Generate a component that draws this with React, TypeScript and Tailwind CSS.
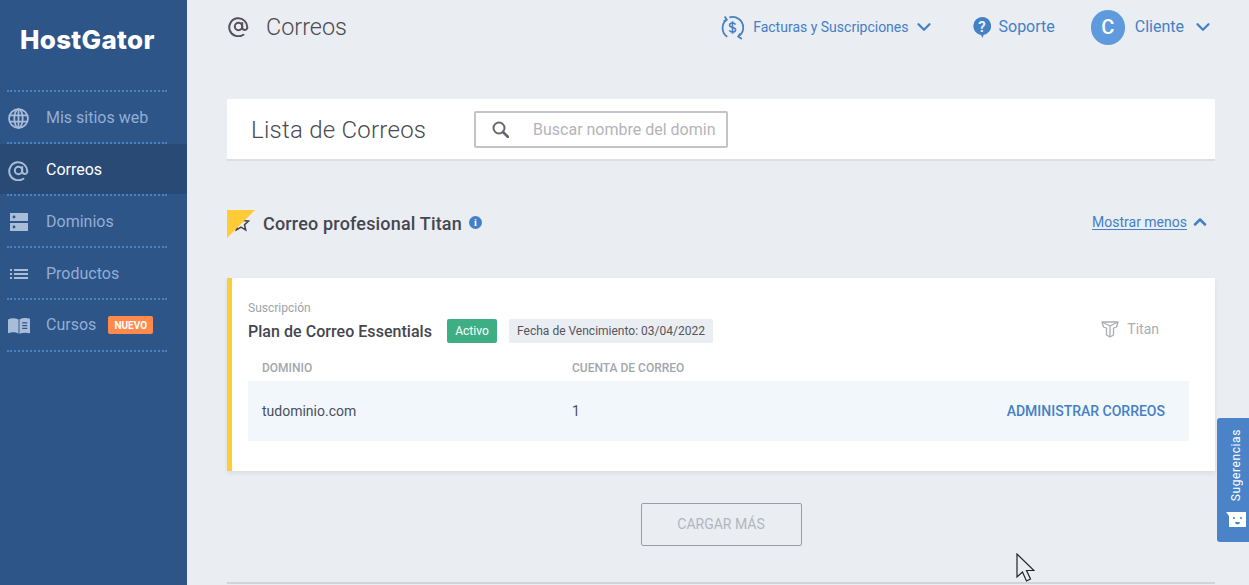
import { ChevronDown, ChevronUp } from 'lucide-react';

const AtIcon = ({ className }: { className: string }) => (
  <svg viewBox="0 0 24 24" fill="none" stroke="currentColor" strokeWidth="2.3" className={className}>
    <circle cx="12" cy="12" r="4.2" />
    <path d="M16.2 8v5.4a3 3 0 0 0 5.8 .6 10.3 10.3 0 1 0-4.4 7.4" strokeLinecap="round" />
  </svg>
);

const GlobeIcon = () => (
  <svg viewBox="0 0 20 20" fill="none" stroke="currentColor" strokeWidth="1.7" className="w-[21px] h-[21px]">
    <circle cx="10" cy="10" r="9" />
    <ellipse cx="10" cy="10" rx="4" ry="9" />
    <path d="M10 1v18M1.6 7h16.8M1.6 13h16.8" />
  </svg>
);

const ServerIcon = () => (
  <svg viewBox="0 0 18 18" className="ml-[2px] w-[18px] h-[18px]" fill="currentColor">
    <path fillRule="evenodd" d="M0 0h18v8H0zM4 2.6a1.4 1.4 0 1 0 0 2.8 1.4 1.4 0 0 0 0-2.8z" />
    <path fillRule="evenodd" d="M0 10h18v8H0zM4 12.6a1.4 1.4 0 1 0 0 2.8 1.4 1.4 0 0 0 0-2.8z" />
  </svg>
);

const ListIcon = () => (
  <svg viewBox="0 0 18 10" className="ml-[2px] w-[18px] h-[10px]" fill="currentColor">
    <path d="M0 0h2v2H0zM4 0h14v2H4zM0 4h2v2H0zM4 4h14v2H4zM0 8h2v2H0zM4 8h14v2H4z" />
  </svg>
);

const BookIcon = () => (
  <svg viewBox="0 0 24 18" className="w-[22px] h-[17px]" fill="currentColor">
    <path d="M0 2.5C3.5.5 7.5.5 11.5 2.5V18C8 16 4 16 0 17.5z" />
    <path fillRule="evenodd" d="M12.5 2.5C16 .5 20 .5 24 1.5v16c-4-1-8-1-11.5.5zM15.500 5.500v1.200h5.500V5.500zM15.500 8.500v1.200h5.500V8.500zM15.500 11.500v1.200h5.500v-1.200z" />
  </svg>
);

const BillingIcon = () => (
  <svg viewBox="0 0 24 24" fill="none" stroke="#4480c6" strokeWidth="1.7" className="w-[25px] h-[25px]">
    <path d="M6.500 4.300A10.300 10.300 0 0 0 7 21" />
    <path d="M9 2.300A10.300 10.300 0 0 1 22.300 12a10.300 10.300 0 0 1-4.800 8.700" />
    <path d="M4.500 1.500l2 3-3 1.500M21 23l-3.500-2.300 2-3" />
    <path d="M15 9.200c-.6-1-1.700-1.500-3-1.500-1.600 0-2.800.8-2.800 2.100 0 2.900 5.800 1.400 5.800 4.300 0 1.300-1.300 2.200-3 2.200-1.400 0-2.500-.6-3.100-1.600M12 6v12" strokeWidth="1.500" />
  </svg>
);

const HelpBubble = () => (
  <svg viewBox="0 0 18 21" className="w-[18px] h-[21px]">
    <path d="M9 0a9 9 0 0 1 1.500 17.900L9.500 21 8 17.900A9 9 0 0 1 9 0z" fill="#4480c6" />
    <text x="9" y="14.500" textAnchor="middle" fontSize="15" fontWeight="700" fill="#eaedf2" fontFamily="Roboto, sans-serif">?</text>
  </svg>
);

const SearchIcon = () => (
  <svg viewBox="0 0 17 17" fill="none" stroke="#6b6570" className="w-[17px] h-[17px] shrink-0">
    <circle cx="7" cy="7" r="5.500" strokeWidth="2" />
    <path d="M11 11l5 5" strokeWidth="2.600" strokeLinecap="round" />
  </svg>
);

const TitanIcon = () => (
  <svg viewBox="0 0 18 17" fill="none" stroke="#a9adb3" strokeWidth="1.300" strokeLinejoin="round" className="w-[18px] h-[17px]">
    <path d="M1 1h16l-1.500 5-3 1v7L9 16l-3.500-2V7l-3-1z" />
    <path d="M1 1l8 4 8-4M9 5v11" />
  </svg>
);

const navItems = [
  { label: 'Mis sitios web', icon: <GlobeIcon />, nudge: true },
  { label: 'Correos', icon: <AtIcon className="w-[21px] h-[21px]" />, active: true, nudge: true },
  { label: 'Dominios', icon: <ServerIcon />, nudge: true },
  { label: 'Productos', icon: <ListIcon />, nudge: true },
  { label: 'Cursos', icon: <BookIcon />, badge: 'NUEVO' },
];

const rowClass = (active?: boolean, nudge?: boolean) => {
  if (active) return 'h-[50px] flex items-center bg-[#284a75] text-white pt-[2px]';
  if (nudge) return 'h-[50px] flex items-center text-[#93aed6] pt-[2px]';
  return 'h-[50px] flex items-center text-[#93aed6]';
};

const Sidebar = () => (
  <aside className="w-[187px] shrink-0 bg-[#2d5588]">
    <div className="h-[90px] pl-[20px] pt-[25px] font-['Inter',sans-serif] text-[26px] leading-[30px] font-extrabold tracking-[0.3px] text-white">
      HostGator
    </div>
    <div className="h-0 mx-[7px] w-[160px] border-t-2 border-dotted border-[#4a82c8]" />
    {navItems.map((item) => (
      <div key={item.label}>
        <div className={rowClass(item.active, item.nudge)}>
          <span className="w-[46px] pl-[8px] flex items-center text-[#a9bdd9] shrink-0">{item.icon}</span>
          <span className="text-[16px]">{item.label}</span>
          {item.badge && (
            <span className="ml-[12px] w-[45px] h-[18px] flex items-center justify-center rounded-[2px] bg-[#ff8a4c] text-[10px] font-bold text-white">
              {item.badge}
            </span>
          )}
        </div>
        <div className="h-0 mx-[7px] w-[160px] border-t-2 border-dotted border-[#4a82c8]" />
      </div>
    ))}
  </aside>
);

const Header = () => (
  <header className="h-[54px] flex items-center justify-between">
    <div className="flex items-center text-[#55505a]">
      <AtIcon className="w-[21px] h-[21px] ml-[1px]" />
      <h1 className="ml-[17px] pt-[2px] text-[23.4px] font-light text-[#4a4a50]">Correos</h1>
    </div>
    <div className="flex items-center text-[#4480c6] pr-[1px]">
      <BillingIcon />
      <span className="ml-[8px] text-[14px]">Facturas y Suscripciones</span>
      <ChevronDown className="ml-[4px] w-[22px] h-[22px]" strokeWidth={2.5} />
      <span className="ml-[38px]">
        <HelpBubble />
      </span>
      <span className="ml-[8px] text-[16px]">Soporte</span>
      <span className="ml-[36px] w-[34px] h-[35px] rounded-full bg-[#5f9ade] flex items-center justify-center text-[20px] font-medium text-white">
        C
      </span>
      <span className="ml-[10px] text-[16px]">Cliente</span>
      <ChevronDown className="ml-[8px] w-[22px] h-[22px]" strokeWidth={2.5} />
    </div>
  </header>
);

const SearchCard = () => (
  <section className="mt-[45px] h-[62px] bg-white border-b-2 border-[#dcdee3] flex items-center pl-[24px]">
    <h2 className="w-[223px] pt-[1px] text-[24px] font-light tracking-[0.25px] text-[#4a4a50]">Lista de Correos</h2>
    <div className="w-[254px] h-[37px] border-2 border-[#c2c4ca] rounded-[2px] flex items-center pl-[16px]">
      <SearchIcon />
      <input
        placeholder="Buscar nombre del dominio"
        className="ml-[24px] w-[183px] pt-[1px] text-[16px] outline-none placeholder:text-[#b4b4b8]"
      />
    </div>
  </section>
);

const SectionTitle = () => (
  <div className="mt-[49px] h-[28px] flex items-center justify-between">
    <div className="flex items-center">
      <span className="w-[28px] h-[28px] [clip-path:polygon(0_0,100%_0,0_100%)] bg-[#ffcb37]" />
      <svg viewBox="0 0 24 24" fill="none" stroke="#3f3f46" strokeWidth="2" className="w-[18px] h-[18px] -ml-[23px] -mt-[2px] mr-[6px]">
        <path d="M12 2l3 6.800 7 .7-5.300 4.700 1.600 7.200-6.300-3.800-6.300 3.800 1.600-7.200L2 9.500l7-.7z" />
      </svg>
      <h3 className="ml-[7px] -mt-[2px] text-[18px] font-medium tracking-[0.17px] text-[#46464e]">Correo profesional Titan</h3>
      <span className="ml-[7px] -mt-[4px] w-[13px] h-[13px] rounded-full bg-[#4480c6] flex items-center justify-center text-[10px] font-bold text-white font-['Liberation_Serif',serif]">
        i
      </span>
    </div>
    <div className="-mt-[4px] flex items-center text-[#4480c6] pr-[5px]">
      <a className="text-[14px] underline underline-offset-2">Mostrar menos</a>
      <ChevronUp className="ml-[3px] w-[20px] h-[20px]" strokeWidth={3} />
    </div>
  </div>
);

const PlanCard = () => (
  <section className="mt-[40px] h-[193px] bg-white border-l-[5px] border-[#ffcb37] shadow-[0_2px_5px_rgba(0,0,0,0.08)] pl-[16px] pr-[26px] pt-[23px]">
    <p className="text-[12px] leading-[14px] text-[#9ea4aa]">Suscripción</p>
    <div className="mt-[4px] flex items-center justify-between">
      <div className="flex items-center">
        <span className="w-[199px] pt-[2px] text-[16px] leading-[22px] font-medium tracking-[0.04px] text-[#46464e]">Plan de Correo Essentials</span>
        <span className="w-[50px] h-[24px] rounded-[2px] bg-[#3eaf85] flex items-center justify-center text-[12px] text-white">
          Activo
        </span>
        <span className="ml-[12px] w-[204px] h-[24px] rounded-[2px] bg-[#eaedf2] flex items-center justify-center text-[12px] text-[#55555c]">
          Fecha de Vencimiento: 03/04/2022
        </span>
      </div>
      <div className="flex items-center pr-[30px] mb-[3px]">
        <TitanIcon />
        <span className="ml-[8px] text-[14px] leading-[17px] text-[#a9adb3]">Titan</span>
      </div>
    </div>
    <div className="mt-[18px] flex pl-[14px] text-[12px] leading-[14px] font-medium text-[#a2a7ac]">
      <span className="w-[310px]">DOMINIO</span>
      <span>CUENTA DE CORREO</span>
    </div>
    <div className="mt-[6px] h-[60px] bg-[#f2f7fc] flex items-center pl-[14px] pr-[24px] text-[14px] text-[#4a4f5c]">
      <span className="w-[310px]">tudominio.com</span>
      <span>1</span>
      <span className="ml-auto font-medium text-[#4480c6]">ADMINISTRAR CORREOS</span>
    </div>
  </section>
);

const FeedbackTab = () => (
  <div className="absolute right-0 top-[418px] w-[32px] h-[124px] rounded-l-[3px] bg-[#4a83c8] flex flex-col items-center justify-end pl-[6px] pb-[15px] text-white">
    <span className="[writing-mode:vertical-rl] rotate-180 text-[12px] tracking-[0.6px]">Sugerencias</span>
    <svg viewBox="0 0 20 15" className="mt-[11px] w-[20px] h-[15px]">
      <path d="M0 0h20v15H3V4z" fill="#fff" />
      <circle cx="8" cy="6" r="1" fill="#4a83c8" />
      <circle cx="15" cy="6" r="1" fill="#4a83c8" />
      <path d="M9 10h5a2.500 2.500 0 0 1-5 0z" fill="#4a83c8" />
    </svg>
  </div>
);

const Cursor = () => (
  <svg viewBox="0 0 19 29" className="absolute left-[1016px] top-[553px] w-[19px] h-[29px]">
    <path d="M1 1v23l5.500-5 4 9 4-2-4-8.500H18z" fill="#eaedf2" stroke="#222" strokeWidth="1.200" />
  </svg>
);

export default function App() {
  return (
    <div className="relative h-[585px] w-[1249px] overflow-hidden flex bg-[#eaedf2] font-['Roboto',sans-serif]">
      <Sidebar />
      <main className="w-[988px] ml-[40px]">
        <Header />
        <SearchCard />
        <SectionTitle />
        <PlanCard />
        <div className="mt-[32px] flex justify-center">
          <button className="w-[161px] h-[43px] border border-[#9a9da3] rounded-[2px] text-[14px] text-[#b2b6bc]">
            CARGAR MÁS
          </button>
        </div>
        <div className="mt-[36px] border-t-2 border-[#d2d4d9]" />
      </main>
      <FeedbackTab />
      <Cursor />
    </div>
  );
}
